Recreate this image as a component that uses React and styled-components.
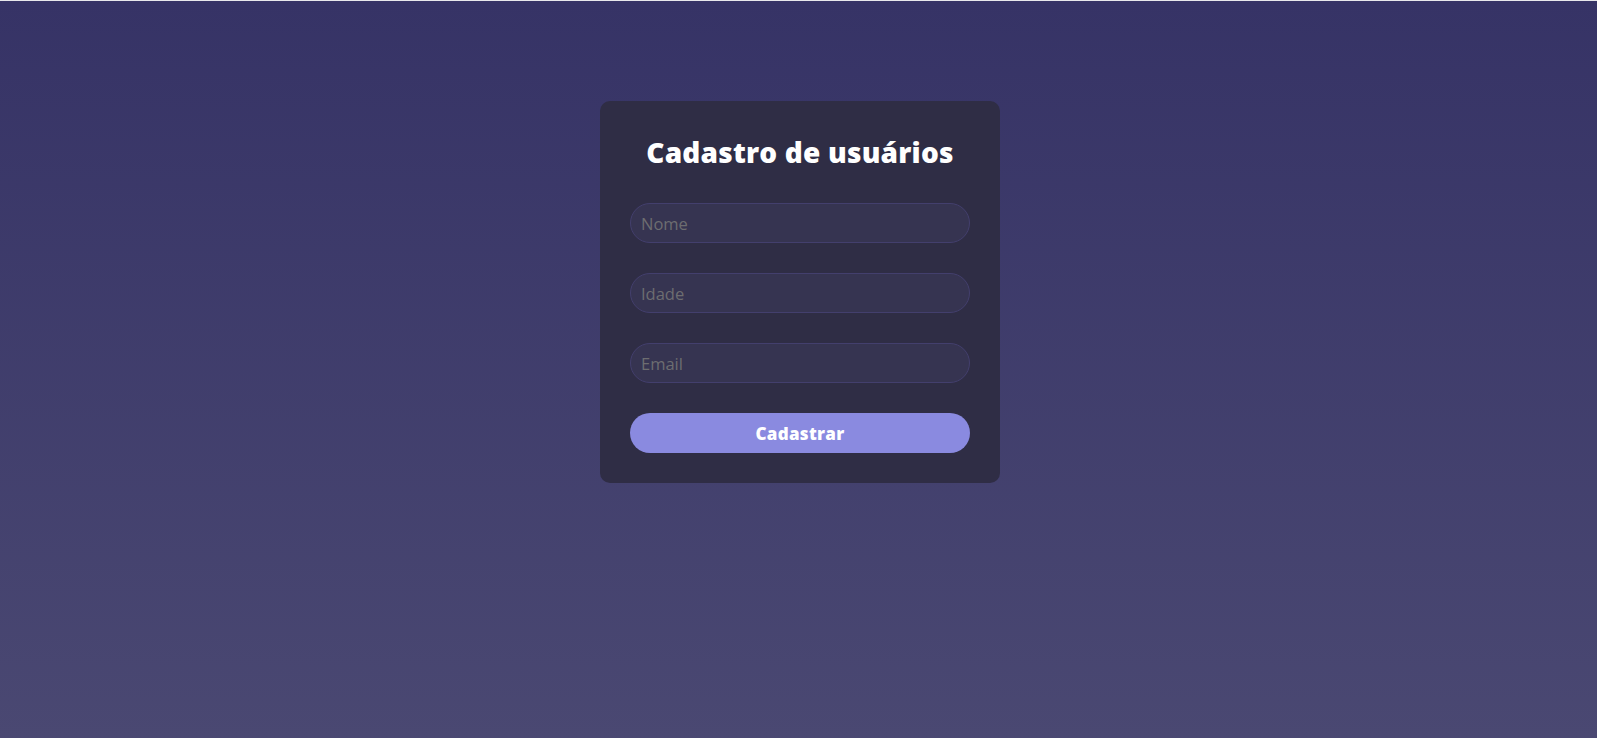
import React from 'react';
import styled, { createGlobalStyle } from 'styled-components';

const GlobalStyle = createGlobalStyle`
  * {
    box-sizing: border-box;
  }

  html, body {
    margin: 0;
    padding: 0;
  }

  body {
    font-family: "Open Sans", "Liberation Sans", sans-serif;
    border-top: 1px solid #e8e8ec;
  }
`;

const Page = styled.main`
  min-height: 737px;
  background: linear-gradient(180deg, #363366 0%, #4a4872 100%);
  display: flex;
  justify-content: center;
  align-items: flex-start;
  padding: 100px 0 0 3px;
`;

const Card = styled.form`
  width: 400px;
  background-color: #2f2d45;
  border-radius: 10px;
  padding: 30px;
  display: flex;
  flex-direction: column;
  gap: 30px;
`;

const Title = styled.h1`
  margin: 0;
  color: #fff;
  font-size: 28px;
  line-height: 42px;
  font-weight: 800;
  text-align: center;
  letter-spacing: 0.2px;
`;

const Input = styled.input`
  width: 100%;
  height: 40px;
  border-radius: 20px;
  border: 1px solid #433f6d;
  background-color: #363451;
  padding: 0 10px;
  font-family: inherit;
  font-size: 16.5px;
  color: #fff;
  outline: none;

  &::placeholder {
    color: #6d6d70;
  }
`;

const Button = styled.button`
  width: 100%;
  height: 40px;
  border: none;
  border-radius: 20px;
  background-color: #8a8ae0;
  color: #fff;
  font-family: inherit;
  font-size: 17px;
  font-weight: 800;
  letter-spacing: 0.3px;
  cursor: pointer;
`;

const App = () => {
  return (
    <>
      <GlobalStyle />
      <Page>
        <Card onSubmit={(e) => e.preventDefault()}>
          <Title>Cadastro de usuários</Title>
          <Input placeholder="Nome" />
          <Input placeholder="Idade" />
          <Input placeholder="Email" />
          <Button type="submit">Cadastrar</Button>
        </Card>
      </Page>
    </>
  );
};

export default App;
